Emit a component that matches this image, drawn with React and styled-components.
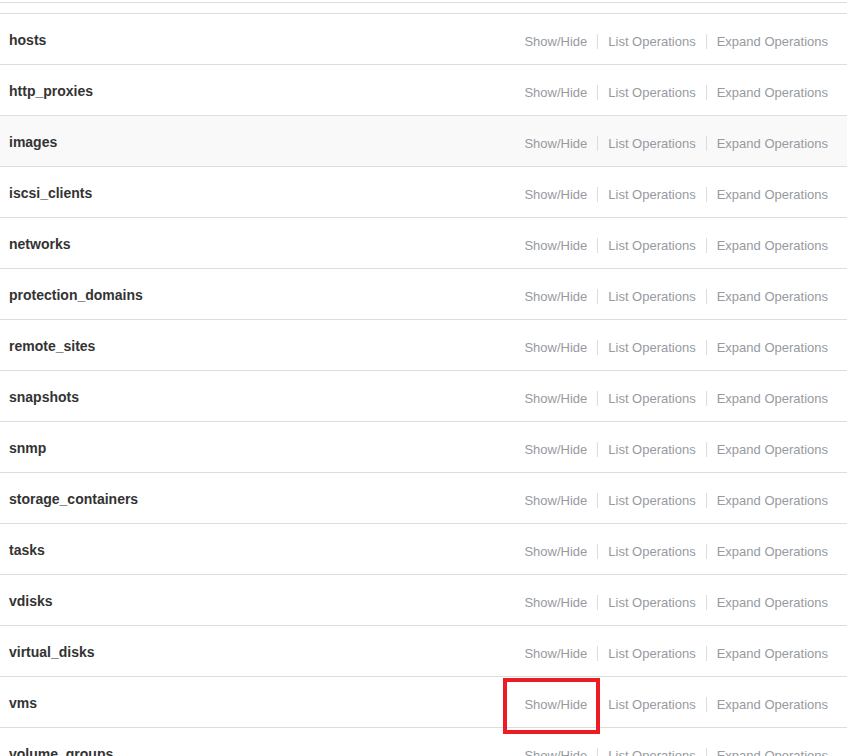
import React from 'react';
import styled, { createGlobalStyle } from 'styled-components';

const GlobalStyle = createGlobalStyle`
    html, body {
        margin: 0;
        padding: 0;
        background: #ffffff;
        font-family: "Liberation Sans", Arial, sans-serif;
    }
`;

const Page = styled.div`
    width: 847px;
    height: 756px;
    overflow: hidden;
`;

/* хвост предыдущего блока, который ушёл за верх окна */
const PrevTail = styled.div`
    height: 2px;
    border-bottom: 1px solid #dddddd;
    margin-bottom: 10px;
`;

const ResourceList = styled.ul`
    list-style: none;
    margin: 0;
    padding: 0;
    border-top: 1px solid #dddddd;
`;

const Resource = styled.li`
    display: flex;
    align-items: center;
    justify-content: space-between;
    height: 48px;
    padding: 2px 9px 0 9px;
    border-bottom: 1px solid #dddddd;
    background: ${p => (p.$hover ? '#f9f9f9' : '#ffffff')};
`;

const Title = styled.h2`
    margin: 0;
    font-size: 14px;
    font-weight: bold;
    color: #333333;
    line-height: 20px;
`;

const Options = styled.ul`
    list-style: none;
    margin: 2px 0 0;
    padding: 0;
    display: flex;
    align-items: center;
`;

const Option = styled.li`
    position: relative;
    padding: 0 10px;
    font-size: 13px;
    line-height: 15px;
    color: #979aa0;
    border-right: 1px solid #dddddd;
    &:last-child {
        border-right: none;
    }
    ${p => p.$marked && `
        &::after {
            content: '';
            position: absolute;
            left: -11px;
            right: -3px;
            top: -19px;
            bottom: -22px;
            border: 4px solid #ec1c24;
            pointer-events: none;
        }
    `}
`;

const resources = [
    'hosts',
    'http_proxies',
    'images',
    'iscsi_clients',
    'networks',
    'protection_domains',
    'remote_sites',
    'snapshots',
    'snmp',
    'storage_containers',
    'tasks',
    'vdisks',
    'virtual_disks',
    'vms',
    'volume_groups',
];

export default function App() {
    return (
        <Page>
            <GlobalStyle />
            <PrevTail />
            <ResourceList>
                {resources.map(name => (
                    <Resource key={name} $hover={name === 'images'}>
                        <Title>{name}</Title>
                        <Options>
                            <Option $marked={name === 'vms'}>Show/Hide</Option>
                            <Option>List Operations</Option>
                            <Option>Expand Operations</Option>
                        </Options>
                    </Resource>
                ))}
            </ResourceList>
        </Page>
    );
}
